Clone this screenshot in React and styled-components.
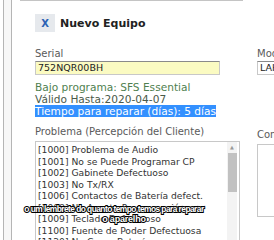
import React from "react";
import styled, { createGlobalStyle } from "styled-components";

const Global = createGlobalStyle`
  body {
    margin: 0;
    background: #fff;
    font-family: "DejaVu Sans", Verdana, sans-serif;
    overflow: hidden;
  }
`;

const Page = styled.div`
  position: relative;
  display: flex;
  width: 274px;
  height: 240px;
  overflow: hidden;
`;

const Rail = styled.div`
  margin-left: 3px;
  width: 7px;
  border-left: 1px solid #b5b5b5;
  border-right: 1px solid #b5b5b5;
  background: #f7f7f7;
  flex-shrink: 0;
`;

const Main = styled.div`
  flex: 1;
  display: flex;
  flex-direction: column;
`;

const TopBox = styled.div`
  margin-left: 8px;
  width: 221px;
  height: 3px;
  border: 1px solid #c4c4c4;
  border-top: none;
`;

const Dialog = styled.div`
  padding-left: 23px;
  display: flex;
  flex-direction: column;
`;

const Header = styled.div`
  display: flex;
  align-items: center;
  gap: 5px;
  margin-top: 13px;
`;

const CloseButton = styled.div`
  width: 20px;
  height: 18px;
  background: #e6e9ed;
  color: #2d62b4;
  font-weight: bold;
  font-size: 10px;
  display: flex;
  align-items: center;
  justify-content: center;
`;

const Title = styled.div`
  font-weight: bold;
  font-size: 11px;
  color: #222;
`;

const Columns = styled.div`
  display: grid;
  grid-template-columns: 205px 60px;
  column-gap: 17px;
  margin-top: 16px;
`;

const Col = styled.div`
  display: flex;
  flex-direction: column;
`;

const Label = styled.div`
  font-size: 10px;
  color: #5a5a5a;
  height: 12px;
  line-height: 12px;
  margin-top: ${(p) => p.$top || 0}px;
  margin-bottom: ${(p) => p.$gap || 0}px;
  white-space: nowrap;
`;

const Input = styled.div`
  width: ${(p) => p.$w}px;
  height: 14px;
  box-sizing: border-box;
  background: ${(p) => (p.$yellow ? "#fbfbc2" : "#fff")};
  border: 1px solid #c8c8c8;
  border-top-color: #8a8a8a;
  font-size: 9.5px;
  line-height: 12px;
  padding-left: 2px;
  color: #222;
  white-space: nowrap;
`;

const Info = styled.div`
  margin-top: 6px;
  display: flex;
  flex-direction: column;
  font-size: 10.6px;
  line-height: 12px;
`;

const InfoLine = styled.div`
  color: ${(p) => p.$color};
  white-space: nowrap;
`;

const Selected = styled.span`
  background: #3390ff;
  color: #fff;
`;

const ListBox = styled.div`
  margin-top: 3px;
  width: 205px;
  height: 110px;
  box-sizing: border-box;
  border: 1px solid #c8c8c8;
  display: flex;
`;

const Items = styled.div`
  flex: 1;
  padding: 2px 0 0 2px;
  font-size: 9.2px;
  line-height: 11.5px;
  color: #333;
  overflow: hidden;
`;

const Item = styled.div`
  white-space: nowrap;
`;

const Scrollbar = styled.div`
  width: 10px;
  margin-right: 2px;
  display: flex;
  flex-direction: column;
  align-items: center;
  background: #f3f3f3;
`;

const Arrow = styled.div`
  height: 11px;
  font-size: 5px;
  color: #999;
  line-height: 11px;
`;

const Thumb = styled.div`
  width: 9px;
  height: 39px;
  background: #c1c1c1;
`;

const TextArea = styled.div`
  margin-top: 3px;
  width: 40px;
  height: 71px;
  border: 1px solid #c8c8c8;
`;

const Caption = styled.div`
  position: absolute;
  left: 0;
  right: 0;
  top: 204px;
  display: flex;
  flex-direction: column;
  align-items: center;
  padding-right: 46px;
  font-family: "Liberation Sans", Arial, sans-serif;
  font-weight: bold;
  color: #fff;
  -webkit-text-stroke: 2px #000;
  paint-order: stroke fill;
`;

const CaptionLine = styled.div`
  font-size: ${(p) => p.$size}px;
  line-height: ${(p) => p.$size + 2}px;
  letter-spacing: ${(p) => p.$ls}px;
  margin-left: ${(p) => p.$shift || 0}px;
  white-space: nowrap;
`;

const items = [
  "[1000] Problema de Audio",
  "[1001] No se Puede Programar CP",
  "[1002] Gabinete Defectuoso",
  "[1003] No Tx/RX",
  "[1006] Contactos de Batería defect.",
  "[1008] No Acepta Programación",
  "[1009] Teclado Defectuoso",
  "[1100] Fuente de Poder Defectuosa",
  "[1120] No Carga Batería",
];

export default function App() {
  return (
    <Page>
      <Global />
      <Rail />
      <Main>
        <TopBox />
        <Dialog>
          <Header>
            <CloseButton>X</CloseButton>
            <Title>Nuevo Equipo</Title>
          </Header>
          <Columns>
            <Col>
              <Label $gap={1}>Serial</Label>
              <Input $w={185} $yellow>752NQR00BH</Input>
              <Info>
                <InfoLine $color="#4f7f4f">Bajo programa: SFS Essential</InfoLine>
                <InfoLine $color="#4a5a4a">Válido Hasta:2020-04-07</InfoLine>
                <InfoLine>
                  <Selected>Tiempo para reparar (días): 5 días</Selected>
                </InfoLine>
              </Info>
              <Label $top={9}>Problema (Percepción del Cliente)</Label>
              <ListBox>
                <Items>
                  {items.map((t) => (
                    <Item key={t}>{t}</Item>
                  ))}
                </Items>
                <Scrollbar>
                  <Arrow>▲</Arrow>
                  <Thumb />
                </Scrollbar>
              </ListBox>
            </Col>
            <Col>
              <Label $gap={1}>Modelo</Label>
              <Input $w={40}>LAH</Input>
              <Label $top={54}>Comentarios</Label>
              <TextArea />
            </Col>
          </Columns>
        </Dialog>
      </Main>
      <Caption>
        <CaptionLine $size={8.4} $ls={-0.55}>
          o um lembrete do quanto tempo temos para reparar
        </CaptionLine>
        <CaptionLine $size={9} $ls={-0.2} $shift={20}>
          o aparelho
        </CaptionLine>
      </Caption>
    </Page>
  );
}
